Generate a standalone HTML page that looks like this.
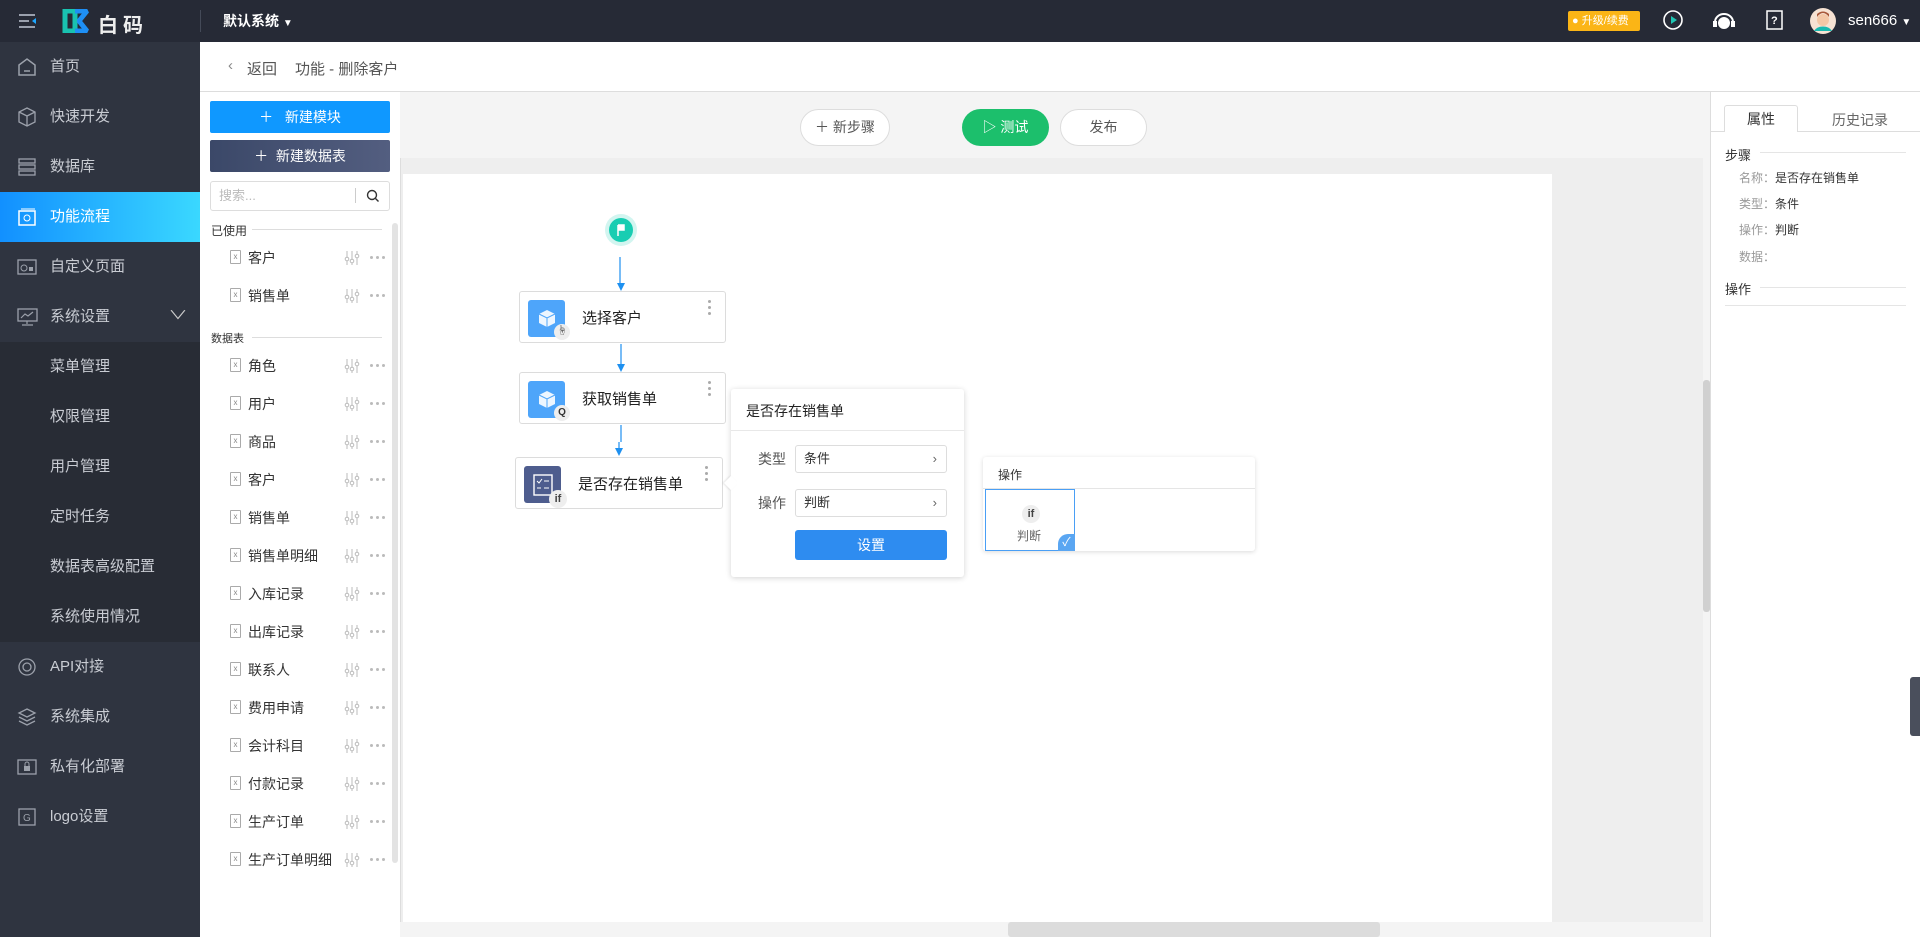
<!DOCTYPE html>
<html><head><meta charset="utf-8">
<style>
*{margin:0;padding:0;box-sizing:border-box}
body{width:1920px;height:937px;overflow:hidden;font-family:"Liberation Sans","Noto Sans CJK SC",sans-serif;background:#fff;position:relative;color:#333}
.a{position:absolute}
.top{left:0;top:0;width:1920px;height:42px;background:#262a36}
.side{left:0;top:42px;width:200px;height:895px;background:#2f3440}
.si{position:absolute;left:0;width:200px;height:50px;line-height:50px;padding-left:50px;color:#c9ccd3;font-size:15px}
.si svg{position:absolute;left:17px;top:15px}
.sub{background:#282c35}
.lp{left:200px;top:92px;width:200px;height:845px;background:#fff}
.row{position:absolute;left:0;width:192px;height:30px;font-size:14px;color:#333}
.row .t{position:absolute;left:48px;top:6px}
.row .f{position:absolute;left:30px;top:8px;width:11px;height:14px;border:1px solid #aaa;border-radius:1px;font-size:8px;color:#888;text-align:center;line-height:12px}
.row .sl{position:absolute;left:144px;top:8px}
.row .dt{position:absolute;left:170px;top:14px;width:20px;height:3px;white-space:nowrap}
.row .dt i{display:inline-block;vertical-align:top;width:3px;height:3px;border-radius:50%;background:#bbb;margin-right:3px}
.node{position:absolute;background:#fff;border:1px solid #dcdcdc;border-radius:3px}
.node .ic{position:absolute;left:8px;top:8px;width:37px;height:37px;border-radius:3px}
.node .tx{position:absolute;left:62px;top:15px;font-size:15px;color:#222}
.node .kb{position:absolute;right:14px;top:8px;width:3px}
.kb i{display:block;width:3px;height:3px;background:#aaa;border-radius:50%;margin-bottom:3px}
.inp{position:absolute;border:1px solid #ddd;border-radius:3px;font-size:13px;color:#333;padding-left:8px;line-height:26px}
</style></head><body>
<div class="a top"></div>
<svg class="a" style="left:18px;top:13px" width="20" height="16" viewBox="0 0 20 16"><path d="M1 2h16M1 8h10M1 14h16" stroke="#9aa0ad" stroke-width="2"/><path d="M18 5l-4 3 4 3z" fill="#1ea7ff"/></svg>
<svg class="a" style="left:62px;top:9px" width="28" height="24" viewBox="0 0 28 24"><path d="M3 2h10v20H3z" fill="none" stroke="#19c2b0" stroke-width="5"/><path d="M13 2h12l-8 10 8 10H13" fill="none" stroke="#1e8ff5" stroke-width="5" stroke-linejoin="bevel"/></svg>
<div class="a" style="left:98px;top:9px;color:#eee;font-size:20px;font-weight:bold;letter-spacing:5px">白码</div>
<div class="a" style="left:200px;top:10px;width:1px;height:22px;background:#444a58"></div>
<div class="a" style="left:223px;top:11px;color:#fff;font-size:14px;font-weight:bold">默认系统 <span style="font-size:10px">▼</span></div>
<div class="a" style="left:1568px;top:11px;width:72px;height:20px;background:#fbb516;border-radius:2px;color:#fff;font-size:11px;line-height:20px;padding-left:4px">● 升级/续费</div>
<svg class="a" style="left:1662px;top:9px" width="22" height="22"><circle cx="11" cy="11" r="9" fill="none" stroke="#fff" stroke-width="1.6"/><path d="M9 7l6 4-6 4z" fill="#1fc6b3"/></svg>
<svg class="a" style="left:1712px;top:10px" width="24" height="20"><path d="M3 12a9 8 0 0118 0" fill="none" stroke="#fff" stroke-width="2"/><circle cx="12" cy="13" r="6" fill="#fff"/><rect x="1" y="11" width="4" height="6" fill="#fff"/><rect x="19" y="11" width="4" height="6" fill="#fff"/></svg>
<svg class="a" style="left:1766px;top:10px" width="18" height="22"><rect x="1" y="1" width="15" height="18" fill="none" stroke="#fff" stroke-width="1.5"/><text x="5" y="14" fill="#fff" font-size="11" font-family="Liberation Sans" font-weight="bold">?</text></svg>
<svg class="a" style="left:1810px;top:8px" width="26" height="26"><circle cx="13" cy="13" r="13" fill="#f6e2d3"/><path d="M4 23a10 8 0 0118 0z" fill="#19b9b0"/><circle cx="13" cy="12" r="6" fill="#f3c7a6"/><path d="M7 9q6-8 12 0v-3q-6-5-12 0z" fill="#a8583a"/></svg>
<div class="a" style="left:1848px;top:12px;color:#fff;font-size:15px">sen666 <span style="font-size:10px">▼</span></div>

<div class="a side"></div>
<div class="a sub" style="left:0;top:342px;width:200px;height:300px"></div>
<div class="a" style="left:0;top:192px;width:200px;height:50px;background:linear-gradient(90deg,#1290ff,#3ad8ff)"></div>
<div class="si" style="top:42px"><svg width="20" height="20"><path d="M2 8l8-6 8 6v10H2z" fill="none" stroke="#9ca1ab" stroke-width="1.5"/><path d="M7 14h6" stroke="#9ca1ab" stroke-width="1.5"/></svg>首页</div>
<div class="si" style="top:92px"><svg width="20" height="20"><path d="M10 1l8 4v10l-8 4-8-4V5z M2 5l8 4 8-4M10 9v10" fill="none" stroke="#9ca1ab" stroke-width="1.3"/></svg>快速开发</div>
<div class="si" style="top:142px"><svg width="20" height="20"><rect x="2" y="2" width="16" height="4" fill="none" stroke="#9ca1ab" stroke-width="1.3"/><rect x="2" y="8" width="16" height="4" fill="none" stroke="#9ca1ab" stroke-width="1.3"/><rect x="2" y="14" width="16" height="4" fill="none" stroke="#9ca1ab" stroke-width="1.3"/></svg>数据库</div>
<div class="si" style="top:192px;color:#fff"><svg width="20" height="20"><rect x="2" y="4" width="16" height="14" fill="none" stroke="#fff" stroke-width="1.5"/><path d="M4 2h14" stroke="#fff"/><circle cx="10" cy="11" r="3" fill="none" stroke="#fff"/></svg>功能流程</div>
<div class="si" style="top:242px"><svg width="20" height="20"><rect x="1" y="3" width="18" height="14" fill="none" stroke="#9ca1ab" stroke-width="1.3"/><circle cx="7" cy="11" r="3" fill="none" stroke="#9ca1ab"/><rect x="12" y="10" width="4" height="4" fill="#9ca1ab"/></svg>自定义页面</div>
<div class="si" style="top:292px"><svg width="22" height="20"><rect x="1" y="2" width="19" height="12" fill="none" stroke="#9ca1ab" stroke-width="1.3"/><path d="M4 11l4-4 3 2 5-4M10 14v3M5 18h11" fill="none" stroke="#9ca1ab" stroke-width="1.2"/></svg>系统设置<span style="position:absolute;left:172px;top:-2px;font-size:12px;color:#ccc;transform:scaleX(1.6)">∨</span></div>
<div class="si" style="top:342px">菜单管理</div>
<div class="si" style="top:392px">权限管理</div>
<div class="si" style="top:442px">用户管理</div>
<div class="si" style="top:492px">定时任务</div>
<div class="si" style="top:542px">数据表高级配置</div>
<div class="si" style="top:592px">系统使用情况</div>
<div class="si" style="top:642px"><svg width="20" height="20"><circle cx="10" cy="10" r="8" fill="none" stroke="#9ca1ab" stroke-width="1.3"/><circle cx="10" cy="10" r="4" fill="none" stroke="#9ca1ab" stroke-width="1.3"/></svg>API对接</div>
<div class="si" style="top:692px"><svg width="20" height="20"><path d="M10 2l8 4-8 4-8-4z M2 10l8 4 8-4M2 14l8 4 8-4" fill="none" stroke="#9ca1ab" stroke-width="1.3"/></svg>系统集成</div>
<div class="si" style="top:742px"><svg width="20" height="20"><rect x="1" y="3" width="18" height="14" fill="none" stroke="#9ca1ab" stroke-width="1.3"/><rect x="7" y="9" width="6" height="5" fill="#9ca1ab"/><path d="M8 9V7a2 2 0 014 0v2" fill="none" stroke="#9ca1ab"/></svg>私有化部署</div>
<div class="si" style="top:792px"><svg width="20" height="20"><rect x="2" y="2" width="16" height="16" fill="none" stroke="#9ca1ab" stroke-width="1.3"/><text x="6" y="14" fill="#9ca1ab" font-size="10" font-family="Liberation Sans">G</text></svg>logo设置</div>

<div class="a" style="left:200px;top:42px;width:1720px;height:50px;background:#fff;border-bottom:1px solid #ddd"></div>
<div class="a" style="left:228px;top:57px;font-size:15px;color:#888">‹</div>
<div class="a" style="left:247px;top:58px;font-size:15px;color:#555">返回</div>
<div class="a" style="left:295px;top:58px;font-size:15px;color:#555">功能 - 删除客户</div>

<div class="a lp"></div>
<div class="a" style="left:210px;top:101px;width:180px;height:32px;background:#0f98ff;border-radius:2px;color:#fff;font-size:14px;text-align:center;line-height:32px">＋&nbsp;&nbsp;&nbsp;新建模块</div>
<div class="a" style="left:210px;top:140px;width:180px;height:32px;background:linear-gradient(90deg,#3b4868,#535e80);border-radius:2px;color:#fff;font-size:14px;text-align:center;line-height:32px">＋&nbsp;&nbsp;新建数据表</div>
<div class="a" style="left:210px;top:181px;width:180px;height:30px;border:1px solid #ddd;border-radius:3px;color:#bbb;font-size:13px;line-height:28px;padding-left:8px">搜索...</div>
<div class="a" style="left:355px;top:188px;width:1px;height:15px;background:#ccc"></div>
<svg class="a" style="left:366px;top:189px" width="14" height="14"><circle cx="6" cy="6" r="4.5" fill="none" stroke="#333" stroke-width="1.4"/><path d="M9.5 9.5l3 3" stroke="#333" stroke-width="1.4"/></svg>
<div class="a" style="left:392px;top:223px;width:6px;height:640px;background:#e3e3e3;border-radius:3px"></div>
<div class="a" style="left:211px;top:222px;font-size:12px;color:#333">已使用</div>
<div class="a" style="left:252px;top:229px;width:130px;height:1px;background:#ddd"></div>
<div class="a" style="left:211px;top:330px;font-size:11px;color:#333">数据表</div>
<div class="a" style="left:252px;top:337px;width:130px;height:1px;background:#ddd"></div>
<div id="rows"></div>

<div class="a" style="left:400px;top:92px;width:1310px;height:845px;background:#eee;border-left:1px solid #ddd"></div>
<div class="a" style="left:400px;top:92px;width:1310px;height:66px;background:#f4f4f4"></div>
<div class="a" style="left:403px;top:174px;width:1149px;height:748px;background:#fff"></div>
<div class="a" style="left:400px;top:922px;width:1310px;height:15px;background:#f4f4f4"></div>
<div class="a" style="left:1008px;top:922px;width:372px;height:15px;background:#dcdcdc;border-radius:3px"></div>
<div class="a" style="left:1703px;top:92px;width:7px;height:845px;background:#f4f4f4"></div>
<div class="a" style="left:1703px;top:380px;width:7px;height:232px;background:#d0d0d0;border-radius:3px"></div>

<div class="a" style="left:800px;top:109px;width:90px;height:37px;background:#fff;border:1px solid #ddd;border-radius:19px;font-size:14px;color:#555;text-align:center;line-height:35px">＋ 新步骤</div>
<div class="a" style="left:962px;top:109px;width:87px;height:37px;background:#1cbf6c;border-radius:19px;font-size:14px;color:#fff;text-align:center;line-height:37px">▷ 测试</div>
<div class="a" style="left:1060px;top:109px;width:87px;height:37px;background:#fff;border:1px solid #ddd;border-radius:19px;font-size:14px;color:#555;text-align:center;line-height:35px">发布</div>

<div class="a" style="left:605px;top:214px;width:32px;height:32px;border-radius:50%;background:rgba(28,207,179,.2)"></div>
<div class="a" style="left:609px;top:218px;width:24px;height:24px;border-radius:50%;background:#18cdb2"></div>
<svg class="a" style="left:615px;top:224px" width="12" height="12"><path d="M3 1v11M3 1h6v5H3" fill="#fff" stroke="#fff" stroke-width="1.5"/></svg>
<svg class="a" style="left:610px;top:255px" width="20" height="210"><path d="M10 2v26M11 28v5" stroke="#1e90f0" stroke-width="1.2" fill="none"/><path d="M7 28l4 8 4-8z" fill="#1e90f0"/>
<path d="M11 89v25" stroke="#1e90f0" stroke-width="1.2"/><path d="M7 109l4 8 4-8z" fill="#1e90f0"/>
<path d="M11 170v17M9 187v10" stroke="#1e90f0" stroke-width="1.2"/><path d="M5 193l4 8 4-8z" fill="#1e90f0"/></svg>

<div class="node" style="left:519px;top:291px;width:207px;height:52px"><div class="ic" style="background:#4ea5fa"></div><svg class="a" style="left:16px;top:16px" width="22" height="22"><path d="M11 2l8 4v9l-8 4-8-4V6z" fill="#fff" opacity=".9"/><path d="M3 6l8 4 8-4M11 10v9" stroke="#4ea5fa" fill="none"/></svg><div class="a" style="left:34px;top:32px;width:16px;height:16px;border-radius:50%;background:#eee;font-size:10px;text-align:center;line-height:16px">☝</div><div class="tx">选择客户</div><div class="kb"><i></i><i></i><i></i></div></div>
<div class="node" style="left:519px;top:372px;width:207px;height:52px"><div class="ic" style="background:#4ea5fa"></div><svg class="a" style="left:16px;top:16px" width="22" height="22"><path d="M11 2l8 4v9l-8 4-8-4V6z" fill="#fff" opacity=".9"/><path d="M3 6l8 4 8-4M11 10v9" stroke="#4ea5fa" fill="none"/></svg><div class="a" style="left:34px;top:32px;width:16px;height:16px;border-radius:50%;background:#eee;font-size:10px;font-weight:bold;text-align:center;line-height:16px">Q</div><div class="tx">获取销售单</div><div class="kb"><i></i><i></i><i></i></div></div>
<div class="node" style="left:515px;top:457px;width:208px;height:52px"><div class="ic" style="background:#4e5d8e"></div><svg class="a" style="left:16px;top:15px" width="22" height="24"><rect x="2" y="2" width="18" height="20" fill="none" stroke="#fff" stroke-width="1.4"/><path d="M5 8l2 2 3-4M12 8h5M5 15h4M12 15h5" stroke="#fff" fill="none"/></svg><div class="a" style="left:33px;top:32px;width:18px;height:18px;border-radius:50%;background:#eee;font-size:11px;font-weight:bold;text-align:center;line-height:18px;color:#444">if</div><div class="tx" style="font-size:15px">是否存在销售单</div><div class="kb"><i></i><i></i><i></i></div></div>

<div class="a" style="left:731px;top:389px;width:233px;height:188px;background:#fff;border-radius:3px;box-shadow:0 1px 6px rgba(0,0,0,.18)"></div>
<div class="a" style="left:726px;top:478px;width:10px;height:10px;background:#fff;transform:rotate(45deg);box-shadow:-1px 1px 2px rgba(0,0,0,.1)"></div>
<div class="a" style="left:746px;top:401px;font-size:14px;color:#222">是否存在销售单</div>
<div class="a" style="left:731px;top:430px;width:233px;height:1px;background:#e8e8e8"></div>
<div class="a" style="left:758px;top:449px;font-size:14px;color:#555">类型</div>
<div class="inp" style="left:795px;top:445px;width:152px;height:28px">条件<span style="position:absolute;right:9px;color:#666">›</span></div>
<div class="a" style="left:758px;top:493px;font-size:14px;color:#555">操作</div>
<div class="inp" style="left:795px;top:489px;width:152px;height:28px">判断<span style="position:absolute;right:9px;color:#666">›</span></div>
<div class="a" style="left:795px;top:530px;width:152px;height:30px;background:#2e8cf0;border-radius:3px;color:#fff;font-size:14px;text-align:center;line-height:30px">设置</div>

<div class="a" style="left:983px;top:457px;width:272px;height:94px;background:#fff;border-radius:3px;box-shadow:0 1px 5px rgba(0,0,0,.15)"></div>
<div class="a" style="left:998px;top:466px;font-size:12px;color:#333">操作</div>
<div class="a" style="left:983px;top:488px;width:272px;height:1px;background:#e5e5e5"></div>
<div class="a" style="left:985px;top:489px;width:90px;height:62px;border:1px solid #4a9ff5"></div>
<div class="a" style="left:1022px;top:505px;width:18px;height:18px;border-radius:50%;background:#eee;font-size:11px;font-weight:bold;text-align:center;line-height:18px;color:#444">if</div>
<div class="a" style="left:1017px;top:527px;font-size:12px;color:#666">判断</div>
<div class="a" style="left:1058px;top:534px;width:17px;height:17px;background:#5aa6f2;border-top-left-radius:10px;color:#fff;font-size:12px;text-align:center;line-height:17px">✓</div>

<div class="a" style="left:1710px;top:92px;width:210px;height:845px;background:#fff;border-left:1px solid #ddd"></div>
<div class="a" style="left:1711px;top:131px;width:209px;height:1px;background:#ddd"></div>
<div class="a" style="left:1724px;top:105px;width:74px;height:27px;background:#fff;border:1px solid #ddd;border-bottom:none;border-radius:3px 3px 0 0;font-size:14px;text-align:center;line-height:26px;color:#333">属性</div>
<div class="a" style="left:1832px;top:110px;font-size:14px;color:#666">历史记录</div>
<div class="a" style="left:1725px;top:145px;font-size:13px;color:#333">步骤</div>
<div class="a" style="left:1760px;top:152px;width:146px;height:1px;background:#e5e5e5"></div>
<div class="a" style="left:1739px;top:169px;font-size:12px;color:#999">名称：<span style="color:#333">是否存在销售单</span></div>
<div class="a" style="left:1739px;top:195px;font-size:12px;color:#999">类型：<span style="color:#333">条件</span></div>
<div class="a" style="left:1739px;top:221px;font-size:12px;color:#999">操作：<span style="color:#333">判断</span></div>
<div class="a" style="left:1739px;top:248px;font-size:12px;color:#999">数据：</div>
<div class="a" style="left:1725px;top:279px;font-size:13px;color:#333">操作</div>
<div class="a" style="left:1760px;top:287px;width:146px;height:1px;background:#e5e5e5"></div>
<div class="a" style="left:1725px;top:305px;width:181px;height:1px;background:#e5e5e5"></div>
<div class="a" style="left:1910px;top:677px;width:10px;height:59px;background:#4a4f5c;border-radius:3px 0 0 3px"></div>

<script>
var items=[["客户",257],["销售单",295]];
var n=["角色","用户","商品","客户","销售单","销售单明细","入库记录","出库记录","联系人","费用申请","会计科目","付款记录","生产订单","生产订单明细"];
n.forEach(function(t,i){items.push([t,365+i*38]);});
var h="";
items.forEach(function(it){
h+='<div class="row" style="left:200px;top:'+(it[1]-15)+'px"><div class="f">x</div><div class="t">'+it[0]+'</div><svg class="sl" width="16" height="16"><path d="M3 1v14M8 1v14M13 1v14" stroke="#bbb"/><circle cx="3" cy="9" r="1.8" fill="#fff" stroke="#bbb"/><circle cx="8" cy="11" r="1.8" fill="#fff" stroke="#bbb"/><circle cx="13" cy="6" r="1.8" fill="#fff" stroke="#bbb"/></svg><div class="dt"><i></i><i></i><i></i></div></div>';
});
document.getElementById("rows").outerHTML=h;
</script>
</body></html>
